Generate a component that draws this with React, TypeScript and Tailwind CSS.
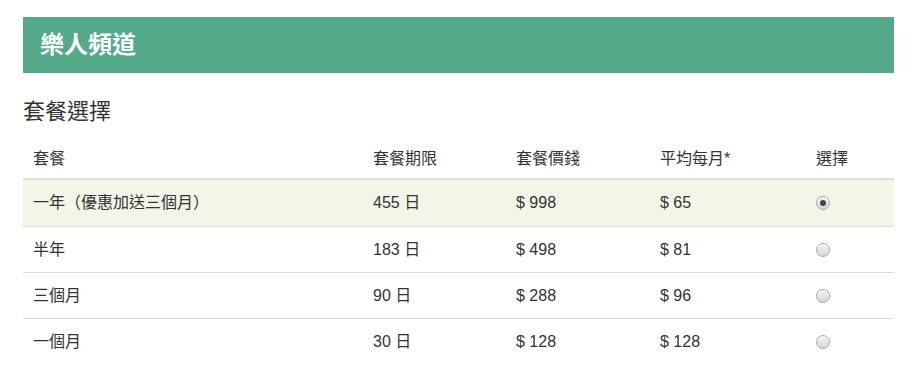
import React from 'react';

const plans = [
    { name: '一年（優惠加送三個月）', days: '455 日', price: '$ 998', monthly: '$ 65', selected: true },
    { name: '半年', days: '183 日', price: '$ 498', monthly: '$ 81', selected: false },
    { name: '三個月', days: '90 日', price: '$ 288', monthly: '$ 96', selected: false },
    { name: '一個月', days: '30 日', price: '$ 128', monthly: '$ 128', selected: false },
];

const Radio: React.FC<{ checked: boolean }> = ({ checked }) => (
    <span className="w-[14px] h-[14px] rounded-full border border-[#a9a9a9] bg-gradient-to-b from-[#f4f4f4] to-[#d6d6d6] flex items-center justify-center shadow-[inset_0_1px_1px_rgba(255,255,255,0.8)]">
        {checked && <span className="w-[6px] h-[6px] rounded-full bg-[#444]" />}
    </span>
);

const App: React.FC = () => {
    return (
        <div className="w-[917px] h-[386px] bg-white pt-[17px] px-[23px] text-[#333] font-['Liberation_Sans','Noto_Sans_CJK_TC',sans-serif]">
            {/* Header */}
            <div className="h-[56px] bg-[#53a988] flex items-center pl-[17px]">
                <h1 className="text-[24px] font-bold text-white leading-none">樂人頻道</h1>
            </div>

            {/* Title */}
            <h2 className="text-[22px] leading-none mt-[28px] mb-0">套餐選擇</h2>

            {/* Table */}
            <div className="mt-[13px] text-[16px]">
                <div className="flex h-[44px] items-center pt-[4px] border-b-2 border-[#dddddd]">
                    <div className="w-[340px] pl-[10px]">套餐</div>
                    <div className="w-[143px] pl-[10px]">套餐期限</div>
                    <div className="w-[144px] pl-[10px]">套餐價錢</div>
                    <div className="w-[156px] pl-[10px]">平均每月*</div>
                    <div className="flex-1 pl-[10px]">選擇</div>
                </div>
                {plans.map((p, i) => (
                    <div
                        key={i}
                        className={`flex h-[46px] items-center ${i > 0 ? 'border-t border-[#dddddd]' : ''} ${p.selected ? 'bg-[#f2f6e6]' : ''}`}
                    >
                        <div className="w-[340px] pl-[10px]">{p.name}</div>
                        <div className="w-[143px] pl-[10px]">{p.days}</div>
                        <div className="w-[144px] pl-[10px]">{p.price}</div>
                        <div className="w-[156px] pl-[10px]">{p.monthly}</div>
                        <div className="flex-1 pl-[10px] flex items-center">
                            <Radio checked={p.selected} />
                        </div>
                    </div>
                ))}
            </div>
        </div>
    );
};

export default App;
